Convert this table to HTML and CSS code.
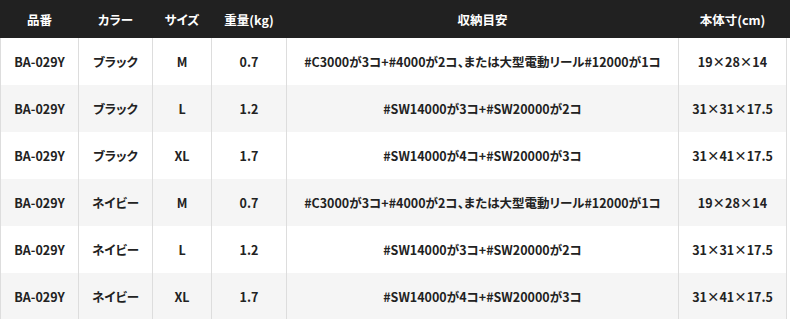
FILE: index.html
```html
<!DOCTYPE html>
<html lang="ja">
<head>
<meta charset="utf-8">
<link rel="stylesheet" href="styles.css">
</head>
<body>
<div class="wrap">
<table class="spec">
  <colgroup>
    <col class="c1"><col class="c2"><col class="c3"><col class="c4"><col class="c5"><col class="c6">
  </colgroup>
  <thead>
    <tr><th>品番</th><th>カラー</th><th>サイズ</th><th>重量(kg)</th><th>収納目安</th><th>本体寸(cm)</th></tr>
  </thead>
  <tbody>
    <tr><td>BA-029Y</td><td>ブラック</td><td>M</td><td>0.7</td><td>#C3000が3コ+#4000が2コ、または大型電動リール#12000が1コ</td><td>19×28×14</td></tr>
    <tr><td>BA-029Y</td><td>ブラック</td><td>L</td><td>1.2</td><td>#SW14000が3コ+#SW20000が2コ</td><td>31×31×17.5</td></tr>
    <tr><td>BA-029Y</td><td>ブラック</td><td>XL</td><td>1.7</td><td>#SW14000が4コ+#SW20000が3コ</td><td>31×41×17.5</td></tr>
    <tr><td>BA-029Y</td><td>ネイビー</td><td>M</td><td>0.7</td><td>#C3000が3コ+#4000が2コ、または大型電動リール#12000が1コ</td><td>19×28×14</td></tr>
    <tr><td>BA-029Y</td><td>ネイビー</td><td>L</td><td>1.2</td><td>#SW14000が3コ+#SW20000が2コ</td><td>31×31×17.5</td></tr>
    <tr><td>BA-029Y</td><td>ネイビー</td><td>XL</td><td>1.7</td><td>#SW14000が4コ+#SW20000が3コ</td><td>31×41×17.5</td></tr>
  </tbody>
</table>
</div>
</body>
</html>
```

FILE: styles.css
```css
html, body {
  margin: 0;
  padding: 0;
  background: #fff;
}
.wrap {
  width: 790px;
  background: linear-gradient(#212121 0, #212121 38px, #fff 38px);
}
.spec {
  width: 786px;
  border-collapse: collapse;
  table-layout: fixed;
  font-family: "Noto Sans CJK JP", "Noto Sans", sans-serif;
  font-weight: 700;
  font-size: 12.5px;
  font-feature-settings: "palt";
  color: #222;
}
.c1 { width: 78px; }
.c2 { width: 74px; }
.c3 { width: 59px; }
.c4 { width: 75px; }
.c5 { width: 392px; }
.c6 { width: 108px; }
.spec th {
  height: 38px;
  padding: 0;
  background: #212121;
  color: #fff;
  text-align: center;
  vertical-align: middle;
  border: 0;
}
.spec td {
  height: 47px;
  padding: 0;
  text-align: center;
  vertical-align: middle;
  border-left: 1px solid #ddd;
  border-right: 1px solid #ddd;
  white-space: nowrap;
}
.spec tbody tr:nth-child(even) td {
  background: #f5f5f5;
}
```
